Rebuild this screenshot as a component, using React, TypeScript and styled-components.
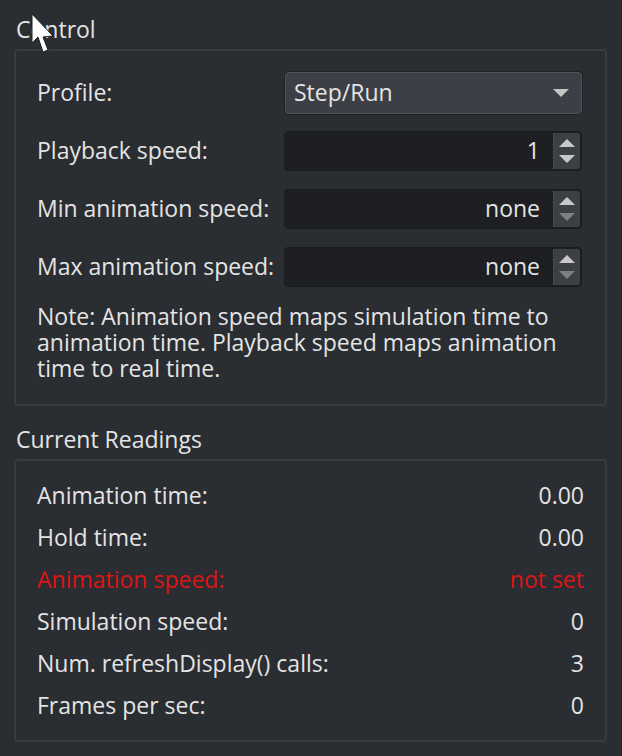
import React from "react";
import styled, { createGlobalStyle } from "styled-components";

const GlobalStyle = createGlobalStyle`
  html, body {
    margin: 0;
    padding: 0;
    background: #2a2d32;
  }
  body {
    font-family: "Open Sans", Roboto, sans-serif;
    font-size: 23px;
    color: #e4e4e4;
  }
`;

const Window = styled.div`
  position: relative;
  width: 622px;
  height: 756px;
  box-sizing: border-box;
  padding: 16px 14px 0 14px;
  overflow: hidden;
  border-right: 1px solid #222428;
`;

const GroupTitle = styled.div`
  height: 26px;
  line-height: 26px;
  padding-left: 2px;
  margin-bottom: 7px;
`;

const GroupBox = styled.div<{ $pad: string }>`
  border: 2px solid #383b40;
  border-radius: 4px;
  padding: ${(p) => p.$pad};
  margin-bottom: 20px;
`;

const FormGrid = styled.div`
  display: grid;
  grid-template-columns: 1fr 298px;
  row-gap: 16px;
  align-items: center;
`;

const FormLabel = styled.div`
  height: 42px;
  line-height: 40px;
`;

const Combo = styled.div`
  height: 42px;
  box-sizing: border-box;
  display: flex;
  align-items: center;
  justify-content: space-between;
  padding: 0 12px 2px 8px;
  margin-left: 1px;
  background: #3c3f45;
  border: 1px solid #4f5257;
  border-radius: 4px;
  box-shadow: 0 0 0 1px #1f2124;

  svg {
    margin-top: 2px;
  }
`;

const SpinBox = styled.div`
  height: 40px;
  box-sizing: border-box;
  display: flex;
  background: #1d1f22;
  border-radius: 4px;
  border: 1px solid #1a1c1f;
  overflow: hidden;
`;

const SpinValue = styled.div`
  flex: 1;
  text-align: right;
  line-height: 36px;
  padding-right: 13px;
`;

const SpinButtons = styled.div`
  width: 26px;
  display: flex;
  flex-direction: column;
  align-items: center;
  justify-content: center;
  gap: 8px;
  background: #3c3f44;
  border-left: 1px solid #45484d;
  margin: 1px 1px 1px 0;
  border-radius: 0 3px 3px 0;
`;

const Note = styled.div`
  margin-top: 15px;
  margin-bottom: 1px;
  line-height: 26px;
`;

const ReadingRow = styled.div<{ $alert?: boolean }>`
  display: flex;
  justify-content: space-between;
  height: 42px;
  line-height: 40px;
  color: ${(p) => (p.$alert ? "#de1414" : "#e4e4e4")};
`;

const Cursor = styled.svg`
  position: absolute;
  left: 0;
  top: 0;
`;

const Triangle = ({ up, color }: { up?: boolean; color: string }) => (
  <svg width="16" height="8" viewBox="0 0 16 8">
    <path d={up ? "M0 8 L8 0 L16 8 Z" : "M0 0 L16 0 L8 8 Z"} fill={color} />
  </svg>
);

const Spin = ({ value, atMin }: { value: string; atMin?: boolean }) => (
  <SpinBox>
    <SpinValue>{value}</SpinValue>
    <SpinButtons>
      <Triangle up color="#c9c9c9" />
      <Triangle color={atMin ? "#7c7f83" : "#c9c9c9"} />
    </SpinButtons>
  </SpinBox>
);

const readings = [
  { label: "Animation time:", value: "0.00" },
  { label: "Hold time:", value: "0.00" },
  { label: "Animation speed:", value: "not set", alert: true },
  { label: "Simulation speed:", value: "0" },
  { label: "Num. refreshDisplay() calls:", value: "3" },
  { label: "Frames per sec:", value: "0" },
];

export default function App() {
  return (
    <Window>
      <GlobalStyle />
      <GroupTitle>Control</GroupTitle>
      <GroupBox $pad="21px 23px 22px 21px">
        <FormGrid>
          <FormLabel>Profile:</FormLabel>
          <Combo>
            <span>Step/Run</span>
            <Triangle color="#c4c4c4" />
          </Combo>
          <FormLabel>Playback speed:</FormLabel>
          <Spin value="1" />
          <FormLabel>Min animation speed:</FormLabel>
          <Spin value="none" atMin />
          <FormLabel>Max animation speed:</FormLabel>
          <Spin value="none" atMin />
        </FormGrid>
        <Note>
          Note: Animation speed maps simulation time to animation time. Playback
          speed maps animation time to real time.
        </Note>
      </GroupBox>
      <GroupTitle>Current Readings</GroupTitle>
      <GroupBox $pad="14px 21px 13px 21px">
        {readings.map((r) => (
          <ReadingRow key={r.label} $alert={r.alert}>
            <span>{r.label}</span>
            <span>{r.value}</span>
          </ReadingRow>
        ))}
      </GroupBox>
      <Cursor width="60" height="60" viewBox="0 0 60 60">
        <path
          d="M32 14 L32 43 L38 37 L43 52 L48 50 L43 37 L53 36 Z"
          fill="#ffffff"
          stroke="#202020"
          strokeWidth="1"
          strokeLinejoin="round"
        />
      </Cursor>
    </Window>
  );
}
